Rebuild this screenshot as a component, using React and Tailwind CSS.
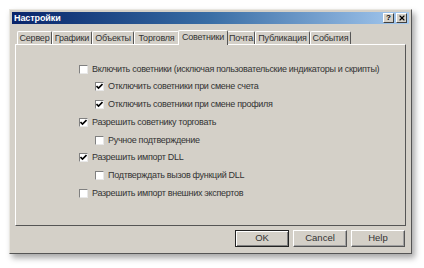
import { X } from 'lucide-react'

const tabs = [
  { name: 'Сервер', w: 'w-[35px]' },
  { name: 'Графики', w: 'w-[40px]' },
  { name: 'Объекты', w: 'w-[42px]' },
  { name: 'Торговля', w: 'w-[45px]' },
  { name: 'Советники', w: 'w-[50px]' },
  { name: 'Почта', w: 'w-[28px]' },
  { name: 'Публикация', w: 'w-[55px]' },
  { name: 'События', w: 'w-[41px]' },
]

const options = [
  { label: 'Включить советники (исключая пользовательские индикаторы и скрипты)', checked: false, indent: false },
  { label: 'Отключить советники при смене счета', checked: true, indent: true },
  { label: 'Отключить советники при смене профиля', checked: true, indent: true },
  { label: 'Разрешить советнику торговать', checked: true, indent: false },
  { label: 'Ручное подтверждение', checked: false, indent: true },
  { label: 'Разрешить импорт DLL', checked: true, indent: false },
  { label: 'Подтверждать вызов функций DLL', checked: false, indent: true },
  { label: 'Разрешить импорт внешних экспертов', checked: false, indent: false },
]

function Checkbox({ checked }) {
  return (
    <div className="w-[9px] h-[9px] bg-white border border-t-[#808080] border-l-[#808080] border-b-[#e8e8e8] border-r-[#e8e8e8] flex items-center justify-center shrink-0">
      {checked && (
        <svg width="7" height="7" viewBox="0 0 7 7">
          <path d="M0.5 3 L2.5 5 L6.5 1" stroke="#000" strokeWidth="1.6" fill="none" />
        </svg>
      )}
    </div>
  )
}

function Button({ children, primary }) {
  return (
    <button
      className={
        'w-[54px] h-[17px] bg-[#d4d0c8] text-[9.5px] text-[#333] flex items-center justify-center border ' +
        (primary
          ? 'border-[#222] shadow-[inset_1px_1px_0_#fff,inset_-1px_-1px_0_#808080]'
          : 'border-t-white border-l-white border-b-[#555] border-r-[#555] shadow-[inset_-1px_-1px_0_#a0a0a0]')
      }
    >
      {children}
    </button>
  )
}

export default function App() {
  return (
    <div className="w-[424px] h-[268px] bg-white pt-[9px] pl-[9px]" style={{ fontFamily: '"Liberation Sans", Arial, sans-serif' }}>
      <div className="w-[403px] h-[245px] bg-[#d4d0c8] border border-t-[#e8e6e0] border-l-[#e8e6e0] border-b-[#555] border-r-[#555] shadow-[3px_4px_6px_rgba(0,0,0,0.35)] p-[1px] flex flex-col">
        <div className="h-[12px] mx-[1px] mt-[1px] flex items-center justify-between bg-gradient-to-r from-[#0a246a] via-[#3a6ea5] to-[#a6caf0] pl-[2px] pr-[2px]">
          <span className="text-white font-bold text-[9px] leading-none tracking-[-0.1px]">Настройки</span>
          <div className="flex gap-[2px]">
            <div className="w-[11px] h-[10px] bg-[#d4d0c8] border border-t-white border-l-white border-b-[#404040] border-r-[#404040] flex items-center justify-center text-[8px] font-bold leading-none text-black">?</div>
            <div className="w-[11px] h-[10px] bg-[#d4d0c8] border border-t-white border-l-white border-b-[#404040] border-r-[#404040] flex items-center justify-center">
              <X size={8} strokeWidth={3.5} color="#000" />
            </div>
          </div>
        </div>

        <div className="mt-[6px] mx-[4px] flex flex-col">
          <div className="flex pl-[2px] items-end h-[14px]">
            {tabs.map((t) => {
              const active = t.name === 'Советники'
              return (
                <div
                  key={t.name}
                  className={
                    t.w +
                    ' text-[9px] leading-none text-[#333] tracking-[-0.2px] whitespace-nowrap flex items-center justify-center border-t border-l border-t-white border-l-white border-r border-r-[#555] rounded-t-[2px] ' +
                    (active ? 'h-[15px] -mx-[1px] bg-[#d4d0c8] relative z-10 -mb-[1px] pb-[2px]' : 'h-[13px]')
                  }
                >
                  {t.name}
                </div>
              )
            })}
          </div>
          <div className="h-[182px] border border-t-white border-l-white border-b-[#555] border-r-[#555] pt-[19px] pl-[63px] flex flex-col gap-[7.2px]">
            {options.map((o) => (
              <div key={o.label} className={'flex items-center gap-[4px] h-[10.5px] ' + (o.indent ? 'pl-[16px]' : '')}>
                <Checkbox checked={o.checked} />
                <span className="text-[9px] leading-none text-[#333] whitespace-nowrap tracking-[-0.3px]">{o.label}</span>
              </div>
            ))}
          </div>
        </div>

        <div className="flex justify-end gap-[4px] mt-[4px] pr-[5px]">
          <Button primary>OK</Button>
          <Button>Cancel</Button>
          <Button>Help</Button>
        </div>
      </div>
    </div>
  )
}
